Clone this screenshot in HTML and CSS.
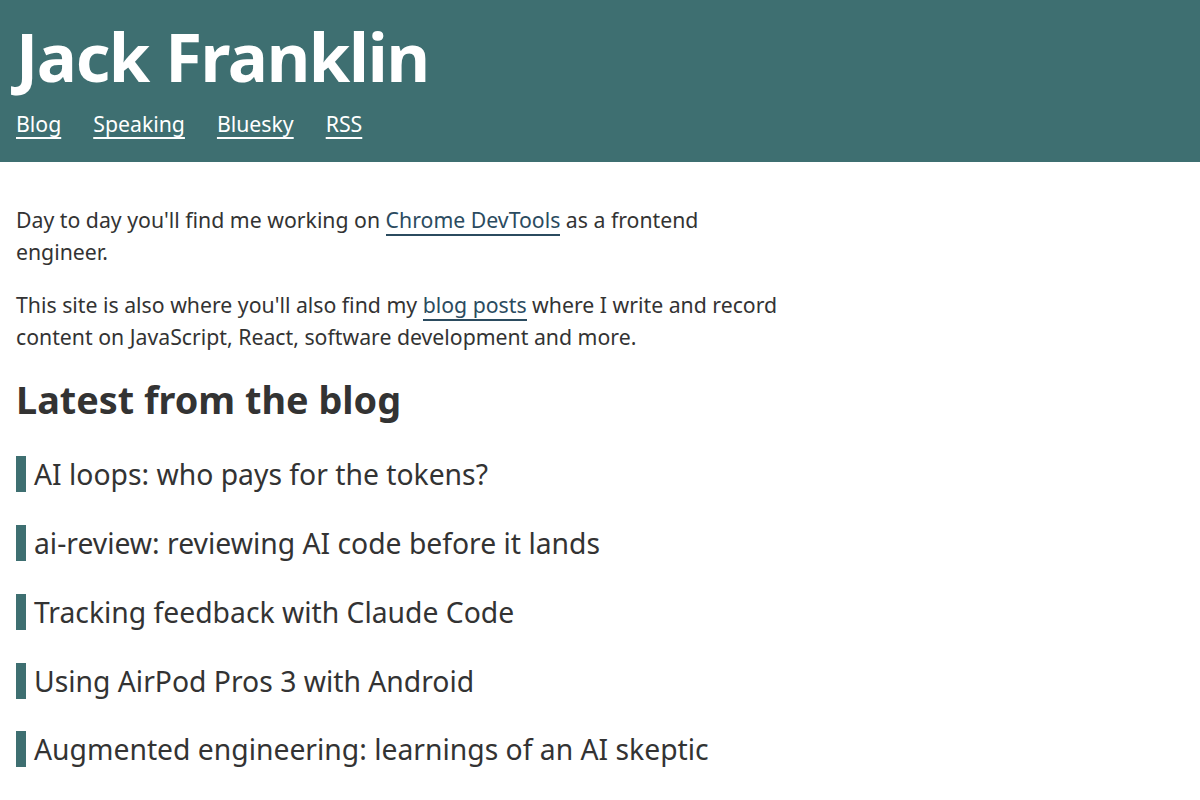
FILE: index.html
```html
<!DOCTYPE html>
<html lang="en">
<head>
<meta charset="utf-8">
<title>Jack Franklin</title>
<link rel="stylesheet" href="styles.css">
</head>
<body>
<header class="site-header">
  <h1 class="site-title">Jack Franklin</h1>
  <nav class="site-nav">
    <a href="#">Blog</a>
    <a href="#">Speaking</a>
    <a href="#">Bluesky</a>
    <a href="#">RSS</a>
  </nav>
</header>
<main class="content">
  <p>Day to day you'll find me working on <a class="inline-link" href="#">Chrome DevTools</a> as a frontend engineer.</p>
  <p>This site is also where you'll also find my <a class="inline-link" href="#">blog posts</a> where I write and record content on JavaScript, React, software development and more.</p>
  <h2 class="section-title">Latest from the blog</h2>
  <ul class="post-list">
    <li><a href="#">AI loops: who pays for the tokens?</a></li>
    <li><a href="#">ai-review: reviewing AI code before it lands</a></li>
    <li><a href="#">Tracking feedback with Claude Code</a></li>
    <li><a href="#">Using AirPod Pros 3 with Android</a></li>
    <li><a href="#">Augmented engineering: learnings of an AI skeptic</a></li>
  </ul>
</main>
</body>
</html>
```

FILE: styles.css
```css
html, body {
  margin: 0;
  padding: 0;
}
body {
  font-family: "Noto Sans", "Open Sans", sans-serif;
  color: #333333;
  background: #ffffff;
}
.site-header {
  background: #3e6f71;
  color: #ffffff;
  padding: 16px 16px 22px;
}
.site-title {
  margin: 0;
  font-size: 67px;
  font-weight: 700;
  line-height: 80px;
  letter-spacing: -0.02em;
}
.site-nav {
  display: flex;
  gap: 32px;
  margin-top: 12px;
  font-size: 21.25px;
  line-height: 32px;
}
.site-nav a {
  color: #ffffff;
  text-decoration: underline;
  text-decoration-thickness: 2px;
  text-underline-offset: 4.5px;
}
.content {
  max-width: 768px;
  padding: 21px 16px 0;
}
.content p {
  font-size: 21.25px;
  line-height: 32px;
  margin: 21.5px 0;
}
.content p:first-child {
  margin-top: 20.5px;
}
.inline-link {
  color: #2b4b5f;
  text-decoration: none;
  border-bottom: 2px solid #2b4b5f;
}
.section-title {
  font-size: 37.8px;
  font-weight: 700;
  line-height: 44.8px;
  margin: 24.5px 0 34px;
}
.post-list {
  list-style: none;
  margin: 0;
  padding: 0;
  display: flex;
  flex-direction: column;
  gap: 32.75px;
}
.post-list li {
  border-left: 10px solid #3e6f71;
  padding-left: 8px;
  font-size: 28.3px;
  line-height: 36px;
}
.post-list a {
  color: #333333;
  text-decoration: none;
}
```
